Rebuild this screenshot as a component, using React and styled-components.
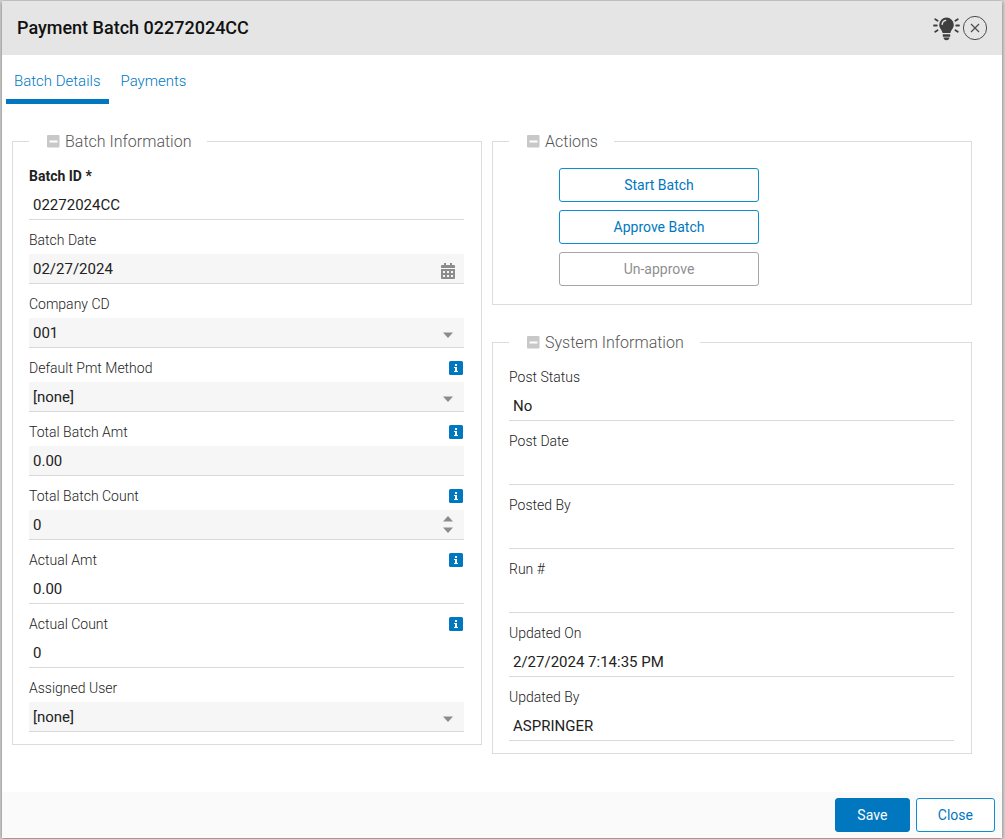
import React, { useState } from 'react';
import styled, { createGlobalStyle, css } from 'styled-components';

const BATCH_FIELDS = [
  { id: 'batchId', label: 'Batch ID *', value: '02272024CC', required: true, plain: true },
  { id: 'batchDate', label: 'Batch Date', value: '02/27/2024', type: 'date' },
  { id: 'companyCd', label: 'Company CD', value: '001', type: 'select' },
  { id: 'pmtMethod', label: 'Default Pmt Method', value: '[none]', type: 'select', info: true },
  { id: 'totalAmt', label: 'Total Batch Amt', value: '0.00', info: true },
  { id: 'totalCount', label: 'Total Batch Count', value: '0', type: 'number', info: true },
  { id: 'actualAmt', label: 'Actual Amt', value: '0.00', readOnly: true, plain: true, info: true },
  { id: 'actualCount', label: 'Actual Count', value: '0', readOnly: true, plain: true, info: true },
  { id: 'assignedUser', label: 'Assigned User', value: '[none]', type: 'select' },
];

const SYSTEM_FIELDS = [
  { id: 'postStatus', label: 'Post Status', value: 'No' },
  { id: 'postDate', label: 'Post Date', value: '' },
  { id: 'postedBy', label: 'Posted By', value: '' },
  { id: 'runNumber', label: 'Run #', value: '' },
  { id: 'updatedOn', label: 'Updated On', value: '2/27/2024 7:14:35 PM' },
  { id: 'updatedBy', label: 'Updated By', value: 'ASPRINGER' },
];

const TABS = ['Batch Details', 'Payments'];

const BulbIcon = () => (
  <svg width="28" height="26" viewBox="0 0 28 26" aria-hidden="true">
    <path
      d="M14.5 2.5a7.3 7.3 0 0 0-7.3 7.3c0 3.4 2.6 5 3.4 8.2h7.8c.8-3.2 3.4-4.8 3.4-8.2a7.3 7.3 0 0 0-7.3-7.3z"
      fill="#3f3f3f"
    />
    <path d="M10.8 19.2h7.4v2.6h-7.4z M11.5 22.6h6c0 1.6-1.3 2.6-3 2.6s-3-1-3-2.6z" fill="#3f3f3f" />
    <path d="M10.1 9.4c.2-2.1 1.6-3.6 3.6-4" stroke="#e5e5e5" strokeWidth="1.4" fill="none" strokeLinecap="round" />
    <path
      d="M2 10.5h2.8M24.2 10.5H27M3.2 4.2l2.4 1.5M25.8 4.2l-2.4 1.5M3.2 16.8l2.4-1.5M25.8 16.8l-2.4-1.5"
      stroke="#3f3f3f"
      strokeWidth="1.8"
      strokeLinecap="round"
    />
  </svg>
);

const CloseIcon = () => (
  <svg width="26" height="26" viewBox="0 0 26 26" aria-hidden="true">
    <circle cx="13" cy="13" r="11.6" stroke="#4c4c4c" fill="none" />
    <path d="M9 9l8 8M17 9l-8 8" stroke="#4c4c4c" strokeWidth="1.2" />
  </svg>
);

const MinusIcon = () => (
  <svg width="13" height="13" viewBox="0 0 13 13" aria-hidden="true">
    <rect width="12.5" height="12.5" rx="1" fill="#c8c8c8" />
    <path d="M2.5 5.5h8v2h-8z" fill="#fff" />
  </svg>
);

const InfoIcon = () => (
  <svg width="14" height="14" viewBox="0 0 14 14" aria-hidden="true">
    <rect width="14" height="14" rx="1.5" fill="#0077bf" />
    <path d="M6 3h2v2H6z M5 6h3v4h1v1H5v-1h1V7H5z" fill="#fff" />
  </svg>
);

const CalendarIcon = () => (
  <svg width="14" height="16" viewBox="0 0 14 16" aria-hidden="true">
    <path
      fillRule="evenodd"
      d="M3 0h2v2h4V0h2v2h2a1 1 0 0 1 1 1v2H0V3a1 1 0 0 1 1-1h2z M0 6h14v9a1 1 0 0 1-1 1H1a1 1 0 0 1-1-1z M2 8v2h2V8z M6 8v2h2V8z M10 8v2h2V8z M2 12v2h2v-2z M6 12v2h2v-2z M10 12v2h2v-2z"
      fill="#8c8c8c"
    />
  </svg>
);

const CaretIcon = ({ up }) => (
  <svg width="10" height="6" viewBox="0 0 10 6" aria-hidden="true">
    <path d={up ? 'M0 5.5L5 0l5 5.5z' : 'M0 .5h10L5 6z'} fill="#8c8c8c" />
  </svg>
);

const Section = ({ title, children }) => (
  <Fieldset>
    <Legend>
      <ToggleButton type="button" aria-label={`Collapse ${title}`}>
        <MinusIcon />
      </ToggleButton>
      {title}
    </Legend>
    {children}
  </Fieldset>
);

const Field = ({ id, label, value, type, info, required, readOnly, plain }) => {
  const [current, setCurrent] = useState(value);
  const handleChange = (e) => setCurrent(e.target.value);

  return (
    <FieldBlock>
      <LabelRow>
        <Label htmlFor={id} $required={required}>
          {label}
        </Label>
        {info && (
          <InfoButton type="button" aria-label={`About ${label}`}>
            <InfoIcon />
          </InfoButton>
        )}
      </LabelRow>
      <Control $plain={plain}>
        {type === 'select' ? (
          <Select id={id} value={current} onChange={handleChange}>
            <option value={value}>{value}</option>
          </Select>
        ) : (
          <Input
            id={id}
            type={type === 'number' ? 'number' : 'text'}
            value={current}
            readOnly={readOnly}
            onChange={handleChange}
          />
        )}
        {type === 'select' && (
          <SelectCaret>
            <CaretIcon />
          </SelectCaret>
        )}
        {type === 'date' && (
          <DateButton type="button" aria-label="Open calendar">
            <CalendarIcon />
          </DateButton>
        )}
        {type === 'number' && (
          <Spinner>
            <SpinButton
              type="button"
              aria-label="Increase"
              onClick={() => setCurrent(String(Number(current) + 1))}
            >
              <CaretIcon up />
            </SpinButton>
            <SpinButton
              type="button"
              aria-label="Decrease"
              onClick={() => setCurrent(String(Number(current) - 1))}
            >
              <CaretIcon />
            </SpinButton>
          </Spinner>
        )}
      </Control>
    </FieldBlock>
  );
};

const App = () => {
  const [activeTab, setActiveTab] = useState(TABS[0]);

  return (
    <>
      <GlobalStyle />
      <Dialog role="dialog" aria-labelledby="dialog-title">
        <Header>
          <Title id="dialog-title">Payment Batch 02272024CC</Title>
          <HeaderButton type="button" aria-label="Tips">
            <BulbIcon />
          </HeaderButton>
          <HeaderButton type="button" aria-label="Close dialog">
            <CloseIcon />
          </HeaderButton>
        </Header>
        <TabList role="tablist">
          {TABS.map((tab) => (
            <Tab
              key={tab}
              type="button"
              role="tab"
              aria-selected={tab === activeTab}
              $active={tab === activeTab}
              onClick={() => setActiveTab(tab)}
            >
              {tab}
            </Tab>
          ))}
        </TabList>
        <Body>
          <Column>
            <Section title="Batch Information">
              {BATCH_FIELDS.map((field) => (
                <Field key={field.id} {...field} />
              ))}
            </Section>
          </Column>
          <Column>
            <Section title="Actions">
              <ActionList>
                <OutlineButton type="button">Start Batch</OutlineButton>
                <OutlineButton type="button">Approve Batch</OutlineButton>
                <OutlineButton type="button" disabled>
                  Un-approve
                </OutlineButton>
              </ActionList>
            </Section>
            <Section title="System Information">
              {SYSTEM_FIELDS.map((field) => (
                <Field key={field.id} {...field} readOnly plain />
              ))}
            </Section>
          </Column>
        </Body>
        <Footer>
          <PrimaryButton type="button">Save</PrimaryButton>
          <OutlineButton type="button">Close</OutlineButton>
        </Footer>
      </Dialog>
    </>
  );
};

const GlobalStyle = createGlobalStyle`
  * {
    box-sizing: border-box;
  }

  body {
    margin: 0;
    background-color: #d4d4d4;
    color: #222222;
    font-family: Roboto, 'Liberation Sans', sans-serif;
    font-size: 14px;
  }

  button, input, select {
    font-family: inherit;
  }
`;

const Dialog = styled.div`
  display: flex;
  flex-direction: column;
  min-height: calc(100vh - 2px);
  margin: 1px 3px 1px 2px;
  background-color: #ffffff;
  box-shadow: 0 1px 4px rgba(0, 0, 0, 0.45);
`;

const Header = styled.header`
  display: flex;
  align-items: center;
  gap: 2px;
  height: 54px;
  padding: 0 14px 0 15px;
  background-color: #e5e5e5;
`;

const Title = styled.h1`
  flex: 1;
  margin: 0;
  padding-bottom: 2px;
  font-size: 18px;
  font-weight: 500;
  color: #111111;
`;

const IconButton = styled.button`
  display: flex;
  padding: 0;
  border: none;
  background: none;
  cursor: pointer;
`;

const HeaderButton = styled(IconButton)``;

const ToggleButton = styled(IconButton)`
  padding-bottom: 2px;
`;

const InfoButton = styled(IconButton)`
  margin-right: 1px;
`;

const TabList = styled.div`
  display: flex;
  gap: 4px;
  padding: 0 4px;
`;

const Tab = styled.button`
  height: 49px;
  padding: 7px 8px 0;
  border: none;
  border-bottom: 5px solid ${({ $active }) => ($active ? '#0077bf' : 'transparent')};
  background: none;
  color: #0077bf;
  font-size: 15px;
  font-weight: 300;
  cursor: pointer;
`;

const Body = styled.main`
  display: grid;
  flex: 1;
  grid-template-columns: 47fr 48fr;
  align-items: start;
  gap: 10px;
  padding: 26px 30px 38px 10px;
`;

const Column = styled.div`
  display: flex;
  flex-direction: column;
  gap: 26px;
  min-width: 0;
`;

const Fieldset = styled.fieldset`
  min-width: 0;
  margin: 0;
  padding: 4px 17px 12px 16px;
  border: 1px solid #dcdcdc;
`;

const Legend = styled.legend`
  display: flex;
  align-items: center;
  gap: 5px;
  padding: 2px 16px 0 18px;
  color: #555555;
  font-size: 16px;
  font-weight: 300;
  line-height: 20px;
`;

const FieldBlock = styled.div`
  display: flex;
  flex-direction: column;
`;

const LabelRow = styled.div`
  display: flex;
  align-items: center;
  justify-content: space-between;
  padding: 10px 0 4px;
`;

const Label = styled.label`
  font-size: 14px;
  font-weight: ${({ $required }) => ($required ? 700 : 300)};
  line-height: 20px;
`;

const Control = styled.div`
  display: flex;
  position: relative;
  height: 30px;
  border-bottom: 1px solid #d9d9d9;
  background-color: ${({ $plain }) => ($plain ? 'transparent' : '#f6f6f6')};
`;

const controlText = css`
  width: 100%;
  padding: 0 4px;
  border: none;
  border-radius: 0;
  outline: none;
  background: transparent;
  color: #222222;
  font-size: 15px;
  font-weight: 400;
`;

const Input = styled.input`
  ${controlText}
  appearance: textfield;

  &::-webkit-inner-spin-button {
    appearance: none;
    margin: 0;
  }
`;

const Select = styled.select`
  ${controlText}
  appearance: none;
`;

const SelectCaret = styled.span`
  display: flex;
  position: absolute;
  top: 14px;
  right: 11px;
  pointer-events: none;
`;

const DateButton = styled(IconButton)`
  align-items: center;
  padding: 4px 9px 0;
`;

const Spinner = styled.div`
  display: flex;
  flex-direction: column;
  justify-content: center;
  gap: 5px;
  padding: 0 11px;
`;

const SpinButton = styled(IconButton)``;

const ActionList = styled.div`
  display: flex;
  flex-direction: column;
  gap: 8px;
  width: 200px;
  margin: 12px 0 6px 50px;
`;

const Button = styled.button`
  min-width: 75px;
  height: 34px;
  padding: 0 21px;
  border: 1px solid #0077bf;
  border-radius: 3px;
  font-size: 14px;
  font-weight: 400;
  cursor: pointer;
`;

const OutlineButton = styled(Button)`
  border-color: #0a8fd2;
  background-color: #ffffff;
  color: #0077bf;

  &:disabled {
    border-color: #a6a6a6;
    color: #8f8f8f;
    cursor: default;
  }
`;

const PrimaryButton = styled(Button)`
  background-color: #0077bf;
  color: #ffffff;
`;

const Footer = styled.footer`
  display: flex;
  justify-content: flex-end;
  gap: 6px;
  padding: 6px 7px;
  background-color: #fafafa;
`;

export default App;
